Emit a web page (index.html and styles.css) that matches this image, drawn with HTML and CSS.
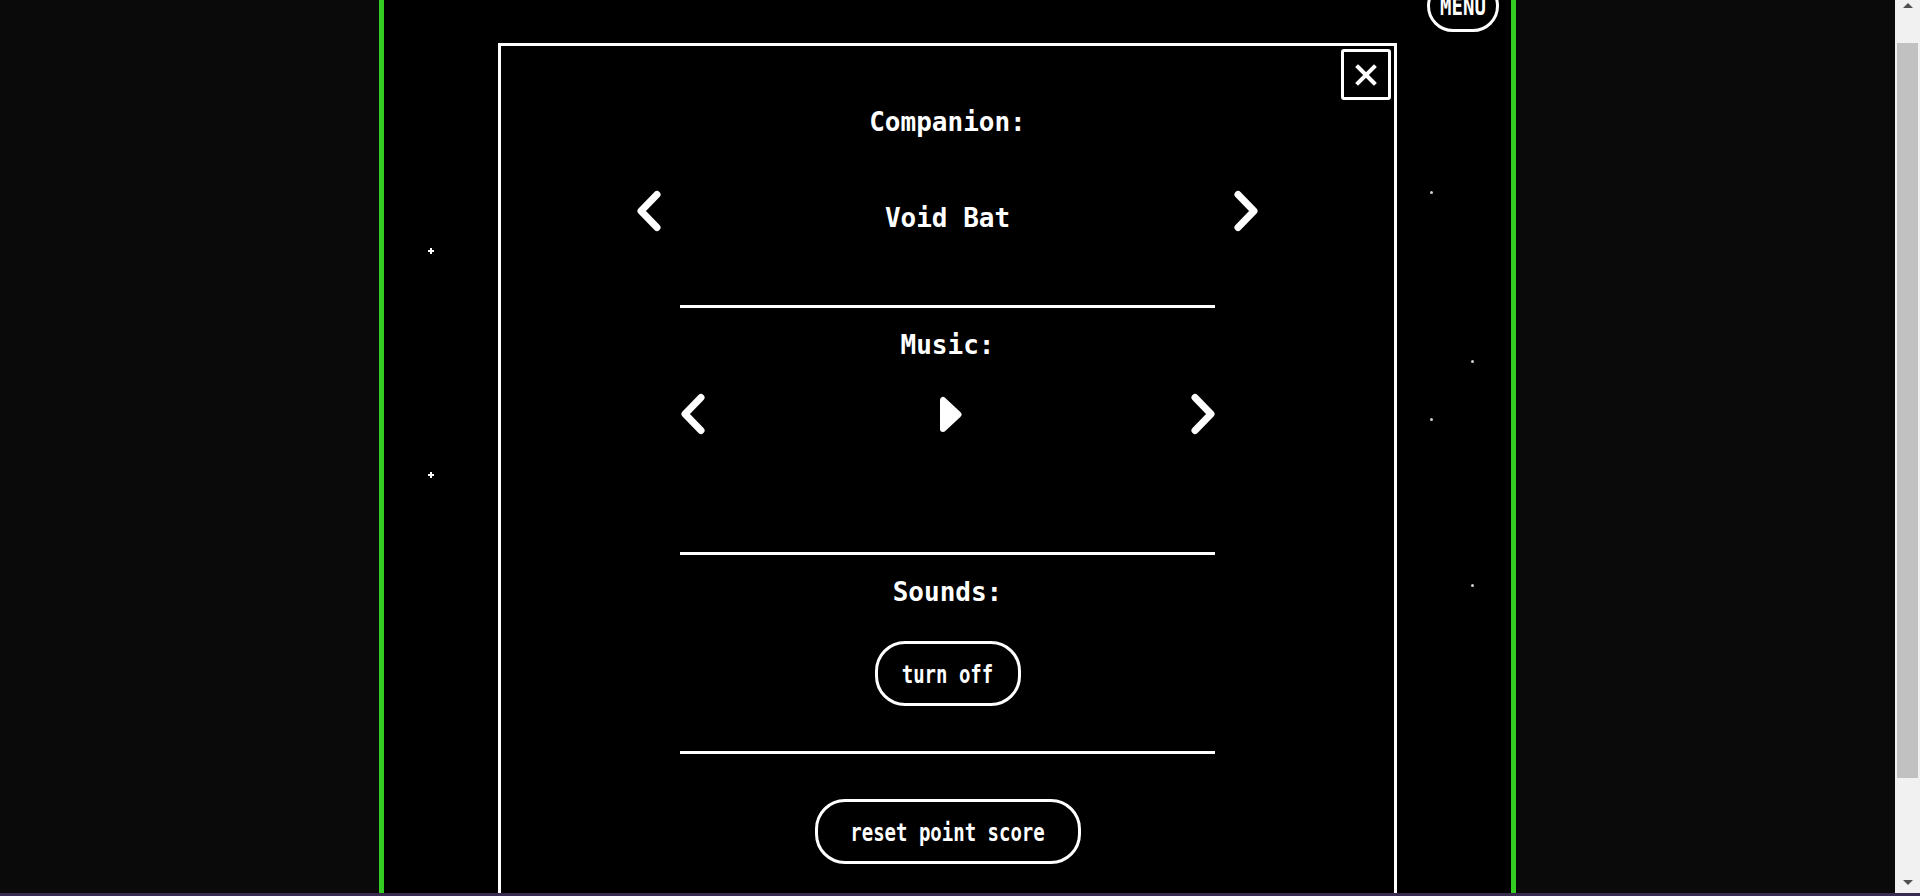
FILE: index.html
```html
<!DOCTYPE html>
<html lang="en">
<head>
<meta charset="utf-8">
<title>Settings</title>
<link rel="stylesheet" href="styles.css">
</head>
<body>
<div class="window">
  <div class="viewport" id="viewport">
    <main class="game">
      <header class="game-top">
        <button class="menu-btn" type="button"><span class="pix">MENU</span></button>
      </header>

      <span class="sparkle sp1"></span>
      <span class="sparkle sp2"></span>
      <span class="dot d1"></span>
      <span class="dot d2"></span>
      <span class="dot d3"></span>
      <span class="dot d4"></span>

      <section class="modal">
        <button class="close-btn" type="button" aria-label="close">
          <svg width="22" height="22" viewBox="0 0 22 22"><path d="M3 3 L19 19 M19 3 L3 19" stroke="#fff" stroke-width="4" stroke-linecap="square" fill="none"/></svg>
        </button>

        <h2 class="heading">Companion:</h2>
        <div class="picker picker-companion">
          <button class="arrow" type="button" aria-label="previous">
            <svg width="26" height="42" viewBox="0 0 26 42"><polyline points="21,4.5 5,21 21,37.5" fill="none" stroke="#fff" stroke-width="7" stroke-linecap="round" stroke-linejoin="round"/></svg>
          </button>
          <span class="picker-value">Void Bat</span>
          <button class="arrow" type="button" aria-label="next">
            <svg width="26" height="42" viewBox="0 0 26 42"><polyline points="5,4.5 21,21 5,37.5" fill="none" stroke="#fff" stroke-width="7" stroke-linecap="round" stroke-linejoin="round"/></svg>
          </button>
        </div>

        <hr class="divider divider-first">

        <h2 class="heading heading-after">Music:</h2>
        <div class="picker picker-music">
          <button class="arrow" type="button" aria-label="previous track">
            <svg width="26" height="42" viewBox="0 0 26 42"><polyline points="21,4.5 5,21 21,37.5" fill="none" stroke="#fff" stroke-width="7" stroke-linecap="round" stroke-linejoin="round"/></svg>
          </button>
          <button class="play" type="button" aria-label="play">
            <svg width="23" height="37" viewBox="0 0 23 37"><polygon points="4,4 4,33 19.5,18.5" fill="#fff" stroke="#fff" stroke-width="6" stroke-linejoin="round"/></svg>
          </button>
          <button class="arrow" type="button" aria-label="next track">
            <svg width="26" height="42" viewBox="0 0 26 42"><polyline points="5,4.5 21,21 5,37.5" fill="none" stroke="#fff" stroke-width="7" stroke-linecap="round" stroke-linejoin="round"/></svg>
          </button>
        </div>

        <hr class="divider divider-music">

        <h2 class="heading heading-after">Sounds:</h2>
        <button class="pill-btn pill-sound" type="button"><span class="pix">turn off</span></button>

        <hr class="divider divider-sound">

        <button class="pill-btn pill-reset" type="button"><span class="pix">reset point score</span></button>
      </section>
    </main>
  </div>

  <div class="scrollbar" aria-hidden="true">
    <div class="sb-btn"><span class="sb-arrow sb-up"></span></div>
    <div class="sb-track"><div class="sb-thumb"></div></div>
    <div class="sb-btn"><span class="sb-arrow sb-down"></span></div>
  </div>
</div>
<div class="frame-edge"></div>
<script src="script.js"></script>
</body>
</html>
```

FILE: styles.css
```css
html,
body {
  height: 100%;
}

body {
  margin: 0;
  height: 896px;
  overflow: hidden;
  display: flex;
  flex-direction: column;
  background: #0a0a0a;
  color: #fff;
  font-family: "DejaVu Sans Mono", "Liberation Mono", monospace;
}

.window {
  flex: 1;
  min-height: 0;
  display: flex;
}

.viewport {
  flex: 1;
  min-width: 0;
  overflow: hidden;
  background: #0a0a0a;
}

.scrollbar {
  flex: none;
  width: 25px;
  display: flex;
  flex-direction: column;
  background: #f1f1f1;
}

.sb-btn {
  flex: none;
  height: 17px;
  display: flex;
  justify-content: center;
}

.sb-arrow {
  width: 0;
  height: 0;
  border-left: 5.5px solid transparent;
  border-right: 5.5px solid transparent;
}

.sb-up {
  margin-top: 3px;
  border-bottom: 5px solid #505050;
}

.sb-down {
  margin-top: 4px;
  border-top: 5px solid #505050;
}

.sb-track {
  flex: 1;
  padding-top: 26px;
}

.sb-thumb {
  height: 735px;
  margin: 0 2px;
  background: #c1c1c1;
}

.frame-edge {
  flex: none;
  height: 3px;
  background: #3a2c4e;
}

button {
  font: inherit;
  color: inherit;
  cursor: pointer;
}

.game {
  position: relative;
  box-sizing: border-box;
  width: 1137px;
  min-height: 1050px;
  margin: 0 auto;
  background: #000;
  border-left: 5px solid #33cc22;
  border-right: 5px solid #33cc22;
}

.game-top {
  display: flex;
  justify-content: flex-end;
  padding: 12px 12px 0 0;
}

.pix {
  display: inline-block;
  transform: scaleY(1.35);
}

.menu-btn {
  box-sizing: border-box;
  width: 72px;
  height: 52px;
  padding: 0;
  background: #000;
  border: 3px solid #fff;
  border-radius: 26px;
  font-size: 19px;
  font-weight: 700;
  display: flex;
  align-items: center;
  justify-content: center;
}

.sparkle {
  position: absolute;
  width: 6px;
  height: 6px;
  background:
    linear-gradient(#fff, #fff) center / 6px 2px no-repeat,
    linear-gradient(#fff, #fff) center / 2px 6px no-repeat;
}

.sp1 { left: 44px; top: 280px; }
.sp2 { left: 44px; top: 504px; }

.dot {
  position: absolute;
  width: 3px;
  height: 3px;
  border-radius: 50%;
  background: #d0d0d0;
}

.d1 { left: 1046px; top: 223px; }
.d2 { left: 1087px; top: 392px; }
.d3 { left: 1046px; top: 450px; }
.d4 { left: 1087px; top: 616px; }

.modal {
  position: absolute;
  top: 75px;
  left: 0;
  right: 0;
  margin: 0 auto;
  box-sizing: border-box;
  width: 899px;
  padding: 61px 0 80px;
  background: #000;
  border: 3px solid #fff;
  display: flex;
  flex-direction: column;
  align-items: center;
}

.close-btn {
  position: absolute;
  top: 3px;
  right: 3px;
  box-sizing: border-box;
  width: 50px;
  height: 51px;
  padding: 0;
  background: #000;
  border: 3px solid #fff;
  border-radius: 3px;
  display: flex;
  align-items: center;
  justify-content: center;
}

.heading {
  margin: 0;
  font-size: 26px;
  line-height: 30px;
  font-weight: 700;
}

.heading-after {
  margin-top: 22px;
}

.picker {
  display: flex;
  justify-content: space-between;
  height: 42px;
}

.picker-companion {
  width: 624px;
  margin-top: 53px;
  align-items: flex-start;
}

.picker-music {
  width: 536px;
  margin-top: 33px;
  align-items: center;
}

.picker-value {
  margin-top: 13px;
  font-size: 26px;
  line-height: 30px;
  font-weight: 700;
}

.arrow,
.play {
  display: block;
  padding: 0;
  background: none;
  border: 0;
  line-height: 0;
}

.play {
  margin-left: 6px;
}

.divider {
  width: 535px;
  height: 3px;
  margin: 0;
  padding: 0;
  border: 0;
  background: #fff;
}

.divider-first { margin-top: 73px; }
.divider-music { margin-top: 117px; }
.divider-sound { margin-top: 45px; }

.pill-btn {
  box-sizing: border-box;
  height: 65px;
  padding: 0;
  background: #000;
  border: 3px solid #fff;
  border-radius: 30px;
  font-size: 19px;
  font-weight: 700;
  display: flex;
  align-items: center;
  justify-content: center;
}

.pill-sound {
  width: 146px;
  margin-top: 34px;
}

.pill-reset {
  width: 266px;
  margin-top: 45px;
}
```

FILE: script.js
```js
(function () {
  var vp = document.getElementById('viewport');
  function place() { vp.scrollTop = 32; }
  place();
  window.addEventListener('load', place);
})();
```
